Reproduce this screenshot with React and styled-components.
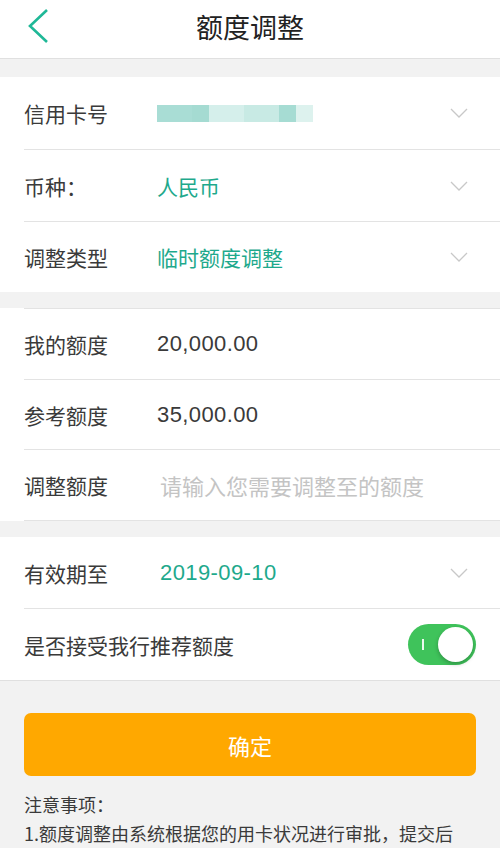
import React, { useState } from 'react';
import styled, { createGlobalStyle } from 'styled-components';

const GlobalStyle = createGlobalStyle`
  html, body {
    margin: 0;
    padding: 0;
    background: #f2f2f2;
    font-family: "Noto Sans CJK SC", "Noto Sans", sans-serif;
  }
  * { box-sizing: border-box; }
`;

const Page = styled.div`
  width: 500px;
  height: 848px;
  overflow: hidden;
  background: #f2f2f2;
`;

const Header = styled.div`
  height: 59px;
  background: #fff;
  border-bottom: 1px solid #e0e0e0;
  display: flex;
  align-items: center;
  justify-content: center;
  position: relative;
`;

const Back = styled.div`
  position: absolute;
  left: 26px;
  top: 6px;
  width: 28px;
  height: 40px;
  display: flex;
  align-items: center;
`;

const Title = styled.h1`
  margin: 0;
  font-size: 27px;
  font-weight: 400;
  color: #222;
  line-height: 1;
  margin-top: -6px;
`;

const Section = styled.div`
  background: #fff;
  margin-top: ${(p) => p.$gap || 0}px;
  border-bottom: ${(p) => (p.$border ? '1px solid #e0e0e0' : 'none')};
`;

const Row = styled.div`
  height: ${(p) => p.$h || 71}px;
  margin-left: 24px;
  padding-right: 24px;
  display: flex;
  align-items: center;
  border-top: ${(p) => (p.$line ? '1px solid #e3e3e3' : 'none')};
`;

const Label = styled.div`
  width: ${(p) => (p.$wide ? 'auto' : '133px')};
  flex: ${(p) => (p.$wide ? 1 : 'none')};
  font-size: 21px;
  color: #3a3a3a;
`;

const Value = styled.div`
  flex: 1;
  font-size: ${(p) => (p.$num || p.$hint ? 22 : 21)}px;
  letter-spacing: ${(p) => (p.$num ? '0.4px' : '0')};
  color: ${(p) => (p.$green ? '#1ea98c' : p.$hint ? '#c4c4c4' : '#3a3a3a')};
  font-family: ${(p) =>
    p.$num ? '"Liberation Sans", Arial, sans-serif' : '"Noto Sans CJK SC", sans-serif'};
  margin-left: ${(p) => p.$shift || 0}px;
`;

const Masked = styled.div`
  display: flex;
  height: 17px;
  div { height: 100%; }
`;

const Chevron = styled.svg`
  width: 18px;
  height: 12px;
  margin-right: 8px;
`;

const SwitchTrack = styled.button`
  width: 68px;
  height: 41px;
  border-radius: 21px;
  border: none;
  padding: 0;
  background: ${(p) => (p.$on ? '#3fc35b' : '#ddd')};
  position: relative;
  cursor: pointer;
`;

const SwitchMark = styled.span`
  position: absolute;
  left: 14px;
  top: 15px;
  width: 2px;
  height: 11px;
  background: rgba(255, 255, 255, 0.9);
`;

const Knob = styled.span`
  position: absolute;
  top: 3px;
  left: ${(p) => (p.$on ? '30px' : '3px')};
  width: 35px;
  height: 35px;
  border-radius: 50%;
  background: #fff;
  box-shadow: 0 2px 4px rgba(0, 0, 0, 0.25);
`;

const Confirm = styled.button`
  display: block;
  margin: 32px 24px 0;
  width: 452px;
  height: 63px;
  border: none;
  border-radius: 7px;
  background: #ffa800;
  color: #fff;
  font-size: 22px;
  font-family: "Noto Sans CJK SC", sans-serif;
`;

const Notes = styled.div`
  padding: 14px 24px 0;
  font-size: 18px;
  line-height: 29px;
  color: #3a3a3a;
`;

const blocks = [
  [35, '#a9ddd5'],
  [17, '#a5dbd2'],
  [35, '#d5efeb'],
  [35, '#c8eae4'],
  [17, '#a6dcd3'],
  [17, '#ddf2ee'],
];

const Down = () => (
  <Chevron viewBox="0 0 18 12">
    <path d="M1 2 L9 10 L17 2" fill="none" stroke="#c8c8c8" strokeWidth="1.3" />
  </Chevron>
);

export default function App() {
  const [accept, setAccept] = useState(true);
  return (
    <Page>
      <GlobalStyle />
      <Header>
        <Back>
          <svg width="24" height="36" viewBox="0 0 24 36">
            <path d="M21 2 L4 18 L21 34" fill="none" stroke="#1fb897" strokeWidth="2.6" />
          </svg>
        </Back>
        <Title>额度调整</Title>
      </Header>

      <Section $gap={18}>
        <Row $h={72}>
          <Label>信用卡号</Label>
          <Value>
            <Masked>
              {blocks.map(([w, c], i) => (
                <div key={i} style={{ width: w, background: c }} />
              ))}
            </Masked>
          </Value>
          <Down />
        </Row>
        <Row $line $h={72}>
          <Label>币种：</Label>
          <Value $green>人民币</Value>
          <Down />
        </Row>
        <Row $line $h={71}>
          <Label>调整类型</Label>
          <Value $green>临时额度调整</Value>
          <Down />
        </Row>
      </Section>

      <Section $gap={16}>
        <Row $line>
          <Label>我的额度</Label>
          <Value $num>20,000.00</Value>
        </Row>
        <Row $line $h={70}>
          <Label>参考额度</Label>
          <Value $num>35,000.00</Value>
        </Row>
        <Row $line>
          <Label>调整额度</Label>
          <Value $hint $shift={3}>请输入您需要调整至的额度</Value>
        </Row>
        <Row $line $h={1} />
      </Section>

      <Section $gap={16} $border>
        <Row $h={71}>
          <Label>有效期至</Label>
          <Value $green $num $shift={3}>2019-09-10</Value>
          <Down />
        </Row>
        <Row $line $h={72}>
          <Label $wide>是否接受我行推荐额度</Label>
          <SwitchTrack $on={accept} onClick={() => setAccept(!accept)}>
            {accept && <SwitchMark />}
            <Knob $on={accept} />
          </SwitchTrack>
        </Row>
      </Section>

      <Confirm>确定</Confirm>
      <Notes>
        <div>注意事项：</div>
        <div>1.额度调整由系统根据您的用卡状况进行审批，提交后</div>
      </Notes>
    </Page>
  );
}
